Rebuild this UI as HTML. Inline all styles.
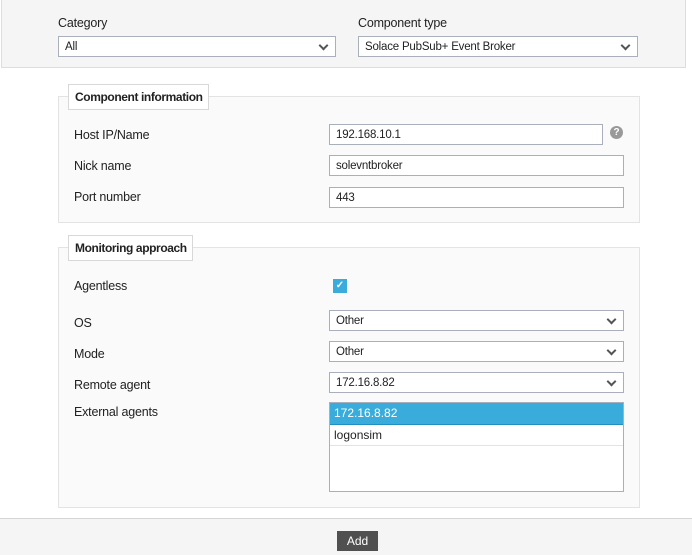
<!DOCTYPE html>
<html><head><style>
*{box-sizing:border-box;margin:0;padding:0}
body{width:692px;height:555px;background:#fff;font-family:"Liberation Sans",sans-serif;font-size:12px;color:#222;position:relative;overflow:hidden}
.a{position:absolute;white-space:nowrap}
.top{left:1px;top:0;width:685px;height:68px;background:#f5f5f5;border:1px solid #ddd;border-top:none}
.lbl{font-size:12.5px;color:#222;letter-spacing:-0.2px}
.sel,.inp{position:absolute;background:#fff;border:1px solid #aab0bb;height:21px;padding-left:6px;line-height:20px;font-size:11.5px;white-space:nowrap;letter-spacing:-0.2px}
.sel::after{content:"";position:absolute;right:8px;top:5px;width:5px;height:5px;border-right:2px solid #555;border-bottom:2px solid #555;transform:rotate(45deg)}
.fs{background:#fafafa;border:1px solid #e3e3e3}
.lg{background:#fff;border:1px solid #d8d8d8;font-weight:bold;font-size:12px;padding-left:6px;line-height:24px;height:26px;letter-spacing:-0.4px}
</style></head><body>
<div class="a top"></div>
<div class="a lbl" style="left:58px;top:16px">Category</div>
<div class="sel" style="left:58px;top:36px;width:278px">All</div>
<div class="a lbl" style="left:358px;top:16px">Component type</div>
<div class="sel" style="left:358px;top:36px;width:280px">Solace PubSub+ Event Broker</div>

<div class="a fs" style="left:58px;top:96px;width:582px;height:127px"></div>
<div class="a lg" style="left:68px;top:84px;width:141px">Component information</div>
<div class="a lbl" style="left:74px;top:128px">Host IP/Name</div>
<div class="inp" style="left:329px;top:124px;width:274px">192.168.10.1</div>
<div class="a" style="left:610px;top:126px;width:13px;height:13px;border-radius:50%;background:#999;color:#fff;font-size:10px;font-weight:bold;text-align:center;line-height:13px">?</div>
<div class="a lbl" style="left:74px;top:159px">Nick name</div>
<div class="inp" style="left:329px;top:155px;width:295px">solevntbroker</div>
<div class="a lbl" style="left:74px;top:190px">Port number</div>
<div class="inp" style="left:329px;top:187px;width:295px">443</div>

<div class="a fs" style="left:58px;top:247px;width:582px;height:261px"></div>
<div class="a lg" style="left:68px;top:235px;width:125px">Monitoring approach</div>
<div class="a lbl" style="left:74px;top:279px">Agentless</div>
<div class="a" style="left:333px;top:279px;width:14px;height:14px;background:#3aacdb;color:#fff;font-size:10px;text-align:center;line-height:14px;font-weight:bold">✓</div>
<div class="a lbl" style="left:74px;top:316px">OS</div>
<div class="sel" style="left:329px;top:310px;width:295px">Other</div>
<div class="a lbl" style="left:74px;top:347px">Mode</div>
<div class="sel" style="left:329px;top:341px;width:295px">Other</div>
<div class="a lbl" style="left:74px;top:378px">Remote agent</div>
<div class="sel" style="left:329px;top:372px;width:295px">172.16.8.82</div>
<div class="a lbl" style="left:74px;top:405px">External agents</div>
<div class="a" style="left:329px;top:402px;width:295px;height:90px;background:#fff;border:1px solid #aab0bb">
<div style="background:#3aacdb;color:#fff;height:22px;line-height:21px;padding-left:4px;border-bottom:1px solid #1f8fc4">172.16.8.82</div>
<div style="height:21px;line-height:20px;padding-left:4px;border-bottom:1px solid #e3e3e3">logonsim</div>
</div>

<div class="a" style="left:0;top:518px;width:692px;height:37px;background:#f5f5f5;border-top:1px solid #d5d5d5"></div>
<div class="a" style="left:337px;top:531px;width:41px;height:20px;background:#505050;color:#fff;text-align:center;line-height:20px;font-size:12px">Add</div>
</body></html>
